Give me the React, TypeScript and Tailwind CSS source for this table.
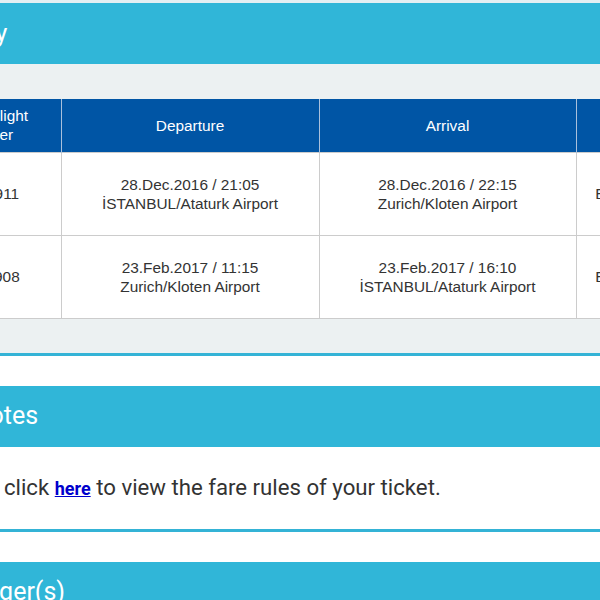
import React from "react";

const flights = [
  {
    no: "TK1911",
    depDate: "28.Dec.2016 / 21:05",
    depPort: "İSTANBUL/Ataturk Airport",
    arrDate: "28.Dec.2016 / 22:15",
    arrPort: "Zurich/Kloten Airport",
    cls: "Economy",
  },
  {
    no: "TK1908",
    depDate: "23.Feb.2017 / 11:15",
    depPort: "Zurich/Kloten Airport",
    arrDate: "23.Feb.2017 / 16:10",
    arrPort: "İSTANBUL/Ataturk Airport",
    cls: "Economy",
  },
];

function SectionHeader({ title }: { title: string }) {
  return (
    <div className="h-[61px] bg-[#30b6d8] flex items-center text-white text-[25px] font-['Roboto',sans-serif]">
      {title}
    </div>
  );
}

export default function App() {
  return (
    <div className="w-[600px] h-[600px] overflow-hidden bg-white">
      <div className="h-[3px] bg-[#e3eff3]" />
      <div className="ml-[-83px] w-[800px]">
        {/* itinerary */}
        <div className="border-b-[3px] border-[#34b3d6]">
          <SectionHeader title="Itinerary" />
          <div className="bg-[#ecf1f2] pt-[35px] pb-[34px] pl-[2px]">
            <table className="table-fixed border-collapse bg-white font-['Liberation_Sans',Arial,sans-serif] text-[15.4px] leading-[19px]">
              <colgroup>
                <col className="w-[142px]" />
                <col className="w-[258px]" />
                <col className="w-[257px]" />
                <col className="w-[102px]" />
              </colgroup>
              <thead>
                <tr className="h-[53px] bg-[#0055a5] text-white">
                  <th className="font-normal border-r border-[#a9c0dc] leading-[19px] pr-[8px]">
                    Airline/Flight
                    <br />
                    Number
                  </th>
                  <th className="font-normal border-r border-[#a9c0dc]">Departure</th>
                  <th className="font-normal border-r border-[#a9c0dc]">Arrival</th>
                  <th className="font-normal">Class</th>
                </tr>
              </thead>
              <tbody className="text-[#333333]">
                {flights.map((f) => (
                  <tr key={f.no} className="h-[83px] text-center">
                    <td className="border border-[#cccccc] border-l-0 pl-[6px]">{f.no}</td>
                    <td className="border border-[#cccccc]">
                      {f.depDate}
                      <br />
                      {f.depPort}
                    </td>
                    <td className="border border-[#cccccc]">
                      {f.arrDate}
                      <br />
                      {f.arrPort}
                    </td>
                    <td className="border border-[#cccccc] border-r-0">{f.cls}</td>
                  </tr>
                ))}
              </tbody>
            </table>
          </div>
        </div>

        {/* fare notes */}
        <div className="mt-[30px] border-b-[3px] border-[#34b3d6]">
          <SectionHeader title="Fare Notes" />
          <div className="h-[82px] flex items-center pl-[15px] text-[22.2px] text-[#333333] font-['Roboto',sans-serif]">
            <p>
              Please click{" "}
              <a href="#" className="font-bold text-[18px] text-[#0000cc] underline">
                here
              </a>{" "}
              to view the fare rules of your ticket.
            </p>
          </div>
        </div>

        {/* passengers */}
        <div className="mt-[30px]">
          <SectionHeader title="Passenger(s)" />
        </div>
      </div>
    </div>
  );
}
